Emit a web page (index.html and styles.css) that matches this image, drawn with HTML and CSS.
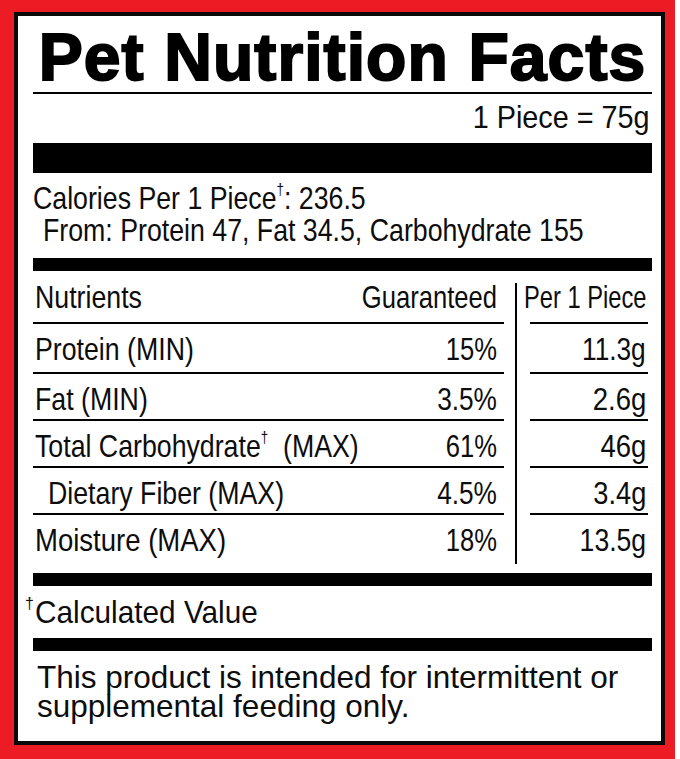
FILE: index.html
```html
<!DOCTYPE html>
<html lang="en">
<head>
<meta charset="utf-8">
<title>Pet Nutrition Facts</title>
<link rel="stylesheet" href="styles.css">
</head>
<body>
<div class="frame">
  <div class="label">
    <h1 class="title">Pet Nutrition Facts</h1>
    <div class="serving"><span class="c r s90">1 Piece = 75g</span></div>
    <div class="bar bar-lg"></div>
    <div class="calories">
      <div><span class="c">Calories Per 1 Piece<sup class="dag">†</sup>: 236.5</span></div>
      <div class="from"><span class="c">From: Protein 47, Fat 34.5, Carbohydrate 155</span></div>
    </div>
    <div class="bar bar-md"></div>
    <div class="table">
      <div class="row head">
        <div class="lc"><span class="c">Nutrients</span><span class="c r s80">Guaranteed</span></div>
        <div class="vl"></div>
        <div class="pc"><span class="c r s74">Per 1 Piece</span></div>
      </div>
      <div class="row first">
        <div class="lc"><span class="c">Protein (MIN)</span><span class="c r s80">15%</span></div>
        <div class="vl"></div>
        <div class="pc"><span class="c r s82">11.3g</span></div>
      </div>
      <div class="row">
        <div class="lc"><span class="c">Fat (MIN)</span><span class="c r s82">3.5%</span></div>
        <div class="vl"></div>
        <div class="pc"><span class="c r s86">2.6g</span></div>
      </div>
      <div class="row">
        <div class="lc"><span class="c">Total Carbohydrate<sup class="dag">†</sup>&nbsp; (MAX)</span><span class="c r s80">61%</span></div>
        <div class="vl"></div>
        <div class="pc"><span class="c r s86">46g</span></div>
      </div>
      <div class="row">
        <div class="lc"><span class="c sub">Dietary Fiber (MAX)</span><span class="c r s82">4.5%</span></div>
        <div class="vl"></div>
        <div class="pc"><span class="c r s85">3.4g</span></div>
      </div>
      <div class="row last">
        <div class="lc"><span class="c s86">Moisture (MAX)</span><span class="c r s80">18%</span></div>
        <div class="vl"></div>
        <div class="pc"><span class="c r s83">13.5g</span></div>
      </div>
    </div>
    <div class="bar bar-md after-table"></div>
    <div class="note"><sup class="dag hang">†</sup><span class="c s93">Calculated Value</span></div>
    <div class="bar bar-md after-note"></div>
    <p class="disclaimer">This product is intended for intermittent or supplemental feeding only.</p>
  </div>
</div>
</body>
</html>
```
FILE: styles.css
```css
html, body {
  margin: 0;
  padding: 0;
  background: #fff;
}
body {
  width: 680px;
  height: 759px;
  overflow: hidden;
}
.frame {
  box-sizing: border-box;
  width: 675px;
  height: 759px;
  background: #ed1c24;
  padding: 12px 10px 14px 14px;
}
.label {
  box-sizing: border-box;
  height: 733px;
  border: 4px solid #0a0a0a;
  background: #fff;
  padding: 0 9px 0 15px;
  font-family: "Liberation Sans", Arial, sans-serif;
  font-size: 32px;
  color: #0d0d0d;
}
/* condensed text: Helvetica Condensed look via horizontal scaling */
.c {
  display: inline-block;
  white-space: nowrap;
  transform: scaleX(0.835);
  transform-origin: left center;
}
.c.r {
  transform-origin: right center;
}
.c.s74 { transform: scaleX(0.74); }
.c.s80 { transform: scaleX(0.80); }
.c.s82 { transform: scaleX(0.82); }
.c.s83 { transform: scaleX(0.83); }
.c.s85 { transform: scaleX(0.85); }
.c.s86 { transform: scaleX(0.86); }
.c.s90 { transform: scaleX(0.90); }
.c.s93 { transform: scaleX(0.93); }

.title {
  margin: 0;
  padding-top: 6px;
  height: 70px;
  line-height: 70px;
  font-family: "Liberation Sans", Arial, sans-serif;
  font-weight: bold;
  font-size: 66px;
  letter-spacing: 1.1px;
  -webkit-text-stroke: 2px #000;
  color: #000;
  text-align: center;
  white-space: nowrap;
  border-bottom: 2px solid #000;
}
.serving {
  text-align: right;
  line-height: 36px;
  height: 36px;
  padding-top: 5px;
  padding-right: 2px;
}
.bar {
  background: #000;
}
.bar-lg {
  height: 30px;
  margin-top: 8px;
}
.bar-md {
  height: 13px;
  margin-top: 12px;
}
.calories {
  padding-top: 9px;
  line-height: 32px;
  white-space: nowrap;
}
.calories > div {
  height: 32px;
}
.from {
  padding-left: 10px;
}
.dag {
  font-size: 0.5em;
  vertical-align: 0.9em;
  line-height: 0;
}
.row {
  display: flex;
  height: 47px;
  line-height: 36px;
  white-space: nowrap;
}
.row.head {
  height: 53px;
}
.row.first {
  height: 50px;
}
.row.last {
  height: 49px;
}
.lc {
  box-sizing: border-box;
  width: 471px;
  display: flex;
  justify-content: space-between;
  align-items: flex-start;
  padding: 7px 7px 0 2px;
  border-bottom: 2px solid #000;
}
.row.head .lc {
  padding-top: 8px;
}
.row.last .lc {
  border-bottom: none;
}
.sub {
  margin-left: 13px;
}
.vl {
  width: 11px;
  border-right: 2px solid #000;
}
.row.head .vl {
  margin-top: 12px;
}
.pc {
  box-sizing: border-box;
  width: 131px;
  display: flex;
  justify-content: flex-end;
  align-items: flex-start;
  padding: 7px 2px 0 0;
  background: linear-gradient(#000, #000) no-repeat right bottom / 118px 2px;
}
.pc .c {
  flex-shrink: 0;
}
.row.head .pc {
  padding-top: 8px;
}
.row.last .pc {
  background: none;
}
.bar.after-table {
  margin-top: 9px;
}
.note {
  padding-top: 8px;
  line-height: 36px;
  height: 36px;
  white-space: nowrap;
}
.dag.hang {
  display: inline-block;
  margin-left: -8px;
  margin-right: 1px;
}
.bar.after-note {
  margin-top: 8px;
}
.disclaimer {
  margin: 0;
  padding: 12px 0 0 4px;
  font-family: "Liberation Sans", Arial, sans-serif;
  font-size: 31.5px;
  line-height: 28.5px;
}
```
